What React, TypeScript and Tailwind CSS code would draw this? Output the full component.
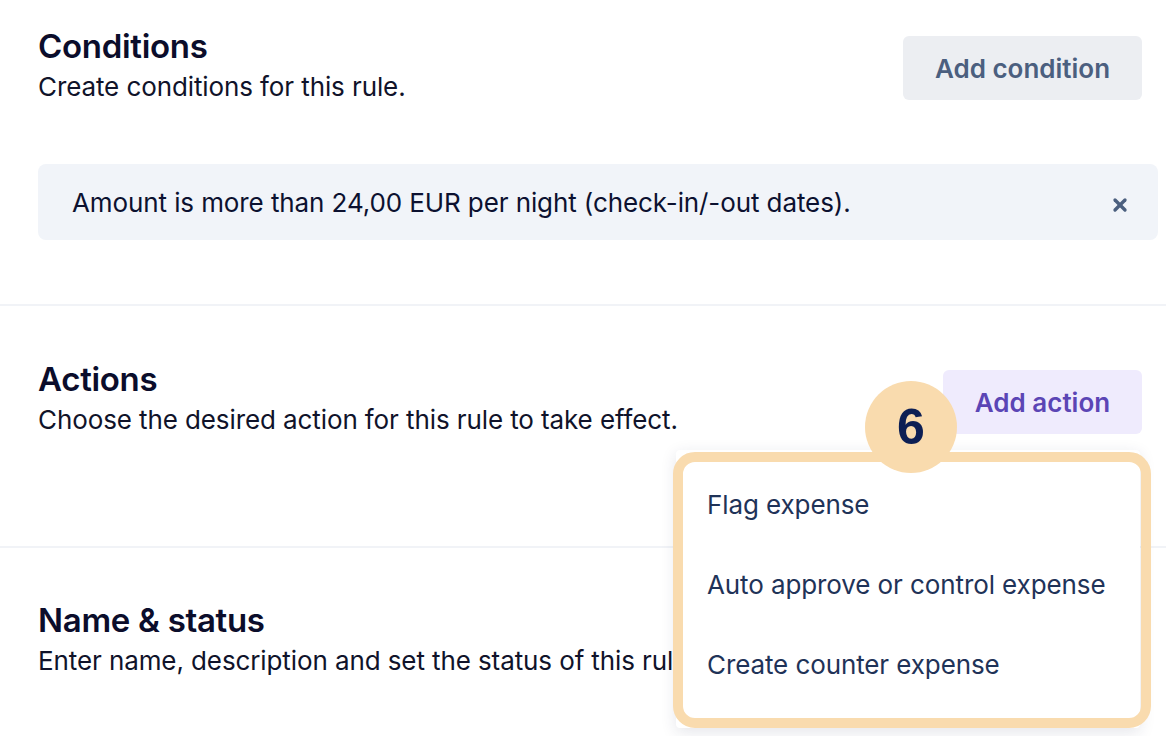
import { X } from "lucide-react";

const font = { fontFamily: '"Inter", "Open Sans", sans-serif' };

function SectionHeader({
  title,
  subtitle,
  children,
}: {
  title: string;
  subtitle: string;
  children?: React.ReactNode;
}) {
  return (
    <div className="flex items-start justify-between">
      <div>
        <h2 className="text-[33px] leading-[40px] font-semibold tracking-[-0.3px] text-[#0b0d2b]">{title}</h2>
        <p className="mt-[5px] text-[26px] leading-[32px] tracking-[-0.1px] text-[#10132a] whitespace-nowrap">{subtitle}</p>
      </div>
      {children}
    </div>
  );
}

const actions = ["Flag expense", "Auto approve or control expense", "Create counter expense"];

export default function App() {
  return (
    <div className="relative w-[1166px] h-[736px] overflow-hidden bg-white" style={font}>
      {/* Conditions */}
      <section className="pl-[38px] pr-[8px] pt-[26px] pb-[64px]">
        <SectionHeader title="Conditions" subtitle="Create conditions for this rule.">
          <button className="mt-[10px] mr-[16px] h-[64px] w-[239px] rounded-[6px] bg-[#eceef2] text-[26px] font-semibold text-[#4b5f7f]">
            Add condition
          </button>
        </SectionHeader>
        <div className="mt-[61px] flex h-[76px] items-center justify-between rounded-[8px] bg-[#f1f4f9] pl-[34px] pr-[28px]">
          <span className="text-[26px] tracking-[-0.1px] text-[#0c1130]">
            Amount is more than 24,00 EUR per night (check-in/-out dates).
          </span>
          <X className="mt-[6px] h-[20px] w-[20px] text-[#4b5f7f]" strokeWidth={4} />
        </div>
      </section>
      <div className="h-[2px] bg-[#f1f3f7]" />

      {/* Actions */}
      <section className="pl-[38px] pr-[24px] pt-[53px] pb-[110px]">
        <SectionHeader title="Actions" subtitle="Choose the desired action for this rule to take effect.">
          <button className="mt-[11px] h-[64px] w-[199px] rounded-[6px] bg-[#efebfd] text-[26px] font-semibold text-[#5b45b5]">
            Add action
          </button>
        </SectionHeader>
      </section>
      <div className="h-[2px] bg-[#f1f3f7]" />

      {/* Name & status */}
      <section className="pl-[38px] pr-[24px] pt-[52px]">
        <SectionHeader
          title="Name & status"
          subtitle="Enter name, description and set the status of this rule."
        />
      </section>

      {/* Dropdown menu */}
      <div className="absolute left-[676px] top-[450px] h-[278px] w-[464px] rounded-[4px] bg-white shadow-[0_4px_16px_rgba(30,40,80,0.12)]">
        <ul className="pt-[40px]">
          {actions.map((a) => (
            <li key={a} className="flex h-[80px] items-start pl-[31px] text-[26px] leading-[30px] tracking-[-0.1px] text-[#1f3358]">
              {a}
            </li>
          ))}
        </ul>
      </div>
      {/* Highlight ring */}
      <div className="pointer-events-none absolute left-[673px] top-[452px] h-[276px] w-[478px] rounded-[22px] border-[10px] border-[#f9dbae]" />
      {/* Step badge */}
      <div className="absolute left-[865px] top-[381px] flex h-[92px] w-[92px] items-center justify-center rounded-full bg-[#f9dbae]">
        <span
          className="text-[50px] font-bold leading-none text-[#0d1f54]"
          style={{ fontFamily: '"Liberation Sans", Arial, sans-serif' }}
        >
          6
        </span>
      </div>
    </div>
  );
}
